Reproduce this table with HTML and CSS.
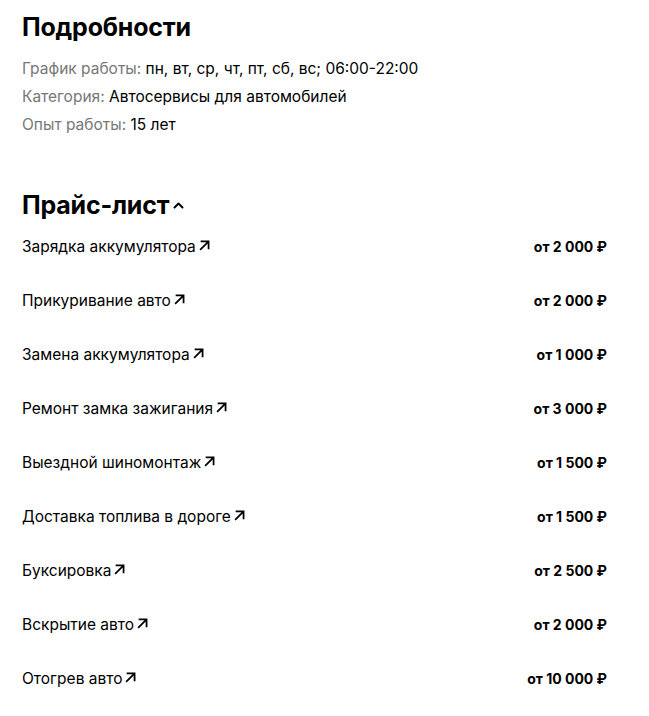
FILE: index.html
```html
<!DOCTYPE html>
<html lang="ru">
<head>
<meta charset="utf-8">
<link rel="stylesheet" href="styles.css">
</head>
<body>
<div class="page">
  <h2 class="title">Подробности</h2>
  <div class="info">
    <div class="info-line"><span class="label">График работы:</span> пн, вт, ср, чт, пт, сб, вс; 06:00-22:00</div>
    <div class="info-line"><span class="label">Категория:</span> Автосервисы для автомобилей</div>
    <div class="info-line"><span class="label">Опыт работы:</span> 15 лет</div>
  </div>
  <h2 class="title title-price">Прайс-лист<svg class="chev" width="11" height="7" viewBox="0 0 11 7"><path d="M1.5 5.5 L5.5 1.5 L9.5 5.5" fill="none" stroke="#000" stroke-width="2" stroke-linecap="round" stroke-linejoin="round"/></svg></h2>
  <div class="prices">
    <div class="row"><span class="name">Зарядка аккумулятора<svg class="arr" viewBox="0 0 10 10"><path d="M1 9 L8.5 1.5 M1.5 1.3 H8.7 V8.5" fill="none" stroke="#000" stroke-width="1.6"/></svg></span><span class="price">от 2 000 ₽</span></div>
    <div class="row"><span class="name">Прикуривание авто<svg class="arr" viewBox="0 0 10 10"><path d="M1 9 L8.5 1.5 M1.5 1.3 H8.7 V8.5" fill="none" stroke="#000" stroke-width="1.6"/></svg></span><span class="price">от 2 000 ₽</span></div>
    <div class="row"><span class="name">Замена аккумулятора<svg class="arr" viewBox="0 0 10 10"><path d="M1 9 L8.5 1.5 M1.5 1.3 H8.7 V8.5" fill="none" stroke="#000" stroke-width="1.6"/></svg></span><span class="price">от 1 000 ₽</span></div>
    <div class="row"><span class="name">Ремонт замка зажигания<svg class="arr" viewBox="0 0 10 10"><path d="M1 9 L8.5 1.5 M1.5 1.3 H8.7 V8.5" fill="none" stroke="#000" stroke-width="1.6"/></svg></span><span class="price">от 3 000 ₽</span></div>
    <div class="row"><span class="name">Выездной шиномонтаж<svg class="arr" viewBox="0 0 10 10"><path d="M1 9 L8.5 1.5 M1.5 1.3 H8.7 V8.5" fill="none" stroke="#000" stroke-width="1.6"/></svg></span><span class="price">от 1 500 ₽</span></div>
    <div class="row"><span class="name">Доставка топлива в дороге<svg class="arr" viewBox="0 0 10 10"><path d="M1 9 L8.5 1.5 M1.5 1.3 H8.7 V8.5" fill="none" stroke="#000" stroke-width="1.6"/></svg></span><span class="price">от 1 500 ₽</span></div>
    <div class="row"><span class="name">Буксировка<svg class="arr" viewBox="0 0 10 10"><path d="M1 9 L8.5 1.5 M1.5 1.3 H8.7 V8.5" fill="none" stroke="#000" stroke-width="1.6"/></svg></span><span class="price">от 2 500 ₽</span></div>
    <div class="row"><span class="name">Вскрытие авто<svg class="arr" viewBox="0 0 10 10"><path d="M1 9 L8.5 1.5 M1.5 1.3 H8.7 V8.5" fill="none" stroke="#000" stroke-width="1.6"/></svg></span><span class="price">от 2 000 ₽</span></div>
    <div class="row"><span class="name">Отогрев авто<svg class="arr" viewBox="0 0 10 10"><path d="M1 9 L8.5 1.5 M1.5 1.3 H8.7 V8.5" fill="none" stroke="#000" stroke-width="1.6"/></svg></span><span class="price">от 10 000 ₽</span></div>
  </div>
</div>
</body>
</html>
```
FILE: styles.css
```css
html, body {
  margin: 0;
  padding: 0;
  background: #fff;
}
body {
  font-family: Inter, "Noto Sans", "Liberation Sans", sans-serif;
  color: #000;
}
.page {
  width: 585px;
  padding: 12px 0 0 22px;
}
.title {
  margin: 0;
  font-size: 25px;
  line-height: 30px;
  font-weight: 700;
  letter-spacing: -0.2px;
}
.info {
  margin-top: 13px;
  font-size: 15.5px;
  line-height: 28px;
}
.label {
  color: #777;
}
.title-price {
  margin-top: 53px;
  line-height: 27px;
  display: flex;
  align-items: center;
}
.chev {
  margin-left: 4px;
  margin-top: -1px;
}
.row {
  height: 54px;
  display: flex;
  align-items: center;
  justify-content: space-between;
}
.name {
  font-size: 15.5px;
  display: flex;
  align-items: center;
}
.arr {
  width: 11px;
  height: 11px;
  margin-left: 3px;
  margin-top: -1px;
}
.price {
  font-size: 14px;
  font-weight: 700;
}
```
